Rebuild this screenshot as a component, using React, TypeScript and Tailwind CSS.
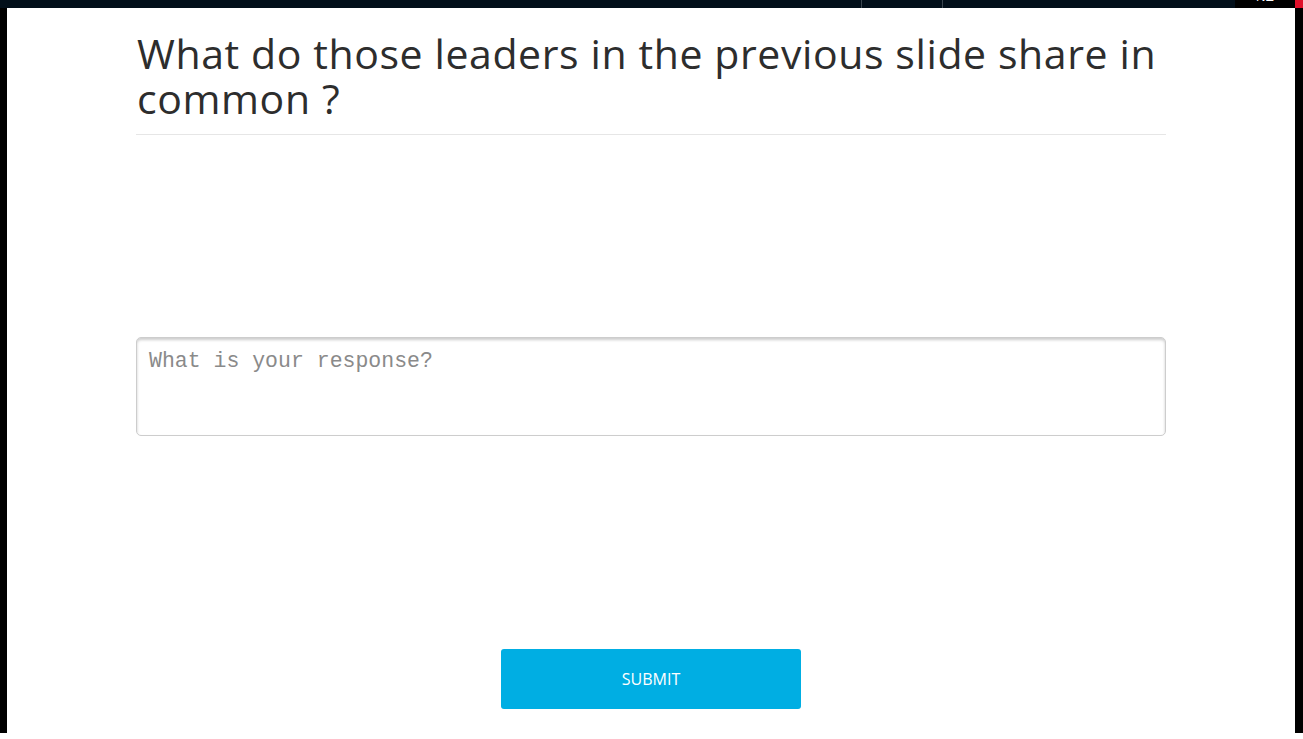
import React from "react";

const TopBar = () => {
  return (
    <div className="flex h-2 w-full overflow-hidden bg-[#020f1a]">
      <div className="w-[861px]" />
      <div className="w-px bg-[#3b4650]" />
      <div className="w-[80px]" />
      <div className="w-px bg-[#3b4650]" />
      <div className="flex-1" />
      <div className="flex w-[60px] items-end justify-center bg-black pb-[5px]">
        <span className="font-['Liberation_Sans',sans-serif] text-[13px] leading-[13px] text-white">
          NE
        </span>
      </div>
      <div className="w-2 bg-[#e0102a]" />
    </div>
  );
};

export default function App() {
  return (
    <div className="flex h-[739px] w-full flex-col bg-white">
      <TopBar />
      <div className="flex h-[725px]">
        <div className="w-[7px] bg-black" />
        <div className="flex flex-1 flex-col items-center bg-white">
          <div className="flex w-[1030px] flex-col">
            <h1 className="border-b border-[#e6e6e6] pt-[23px] pb-[13px] pl-px font-['Open_Sans',sans-serif] text-[41px] leading-[45px] font-normal tracking-[0.6px] text-[#2d2d2d]">
              What do those leaders in the previous slide share in common ?
            </h1>
            <textarea
              placeholder="What is your response?"
              className="mt-[202px] h-[99px] w-full resize-none rounded-[5px] border border-[#cdcdcd] px-3 pt-[10px] pb-2 font-['Liberation_Mono',monospace] text-[21.5px] leading-[26px] text-[#555] shadow-[inset_0_2px_3px_rgba(0,0,0,0.2)] outline-none placeholder:text-[#8a8a8a]"
            />
            <div className="mt-[213px] flex justify-center">
              <button className="h-[60px] w-[300px] rounded-[3px] bg-[#00aee3] font-['Open_Sans',sans-serif] text-[16px] text-white">
                SUBMIT
              </button>
            </div>
          </div>
        </div>
        <div className="w-2 bg-black" />
      </div>
    </div>
  );
}
